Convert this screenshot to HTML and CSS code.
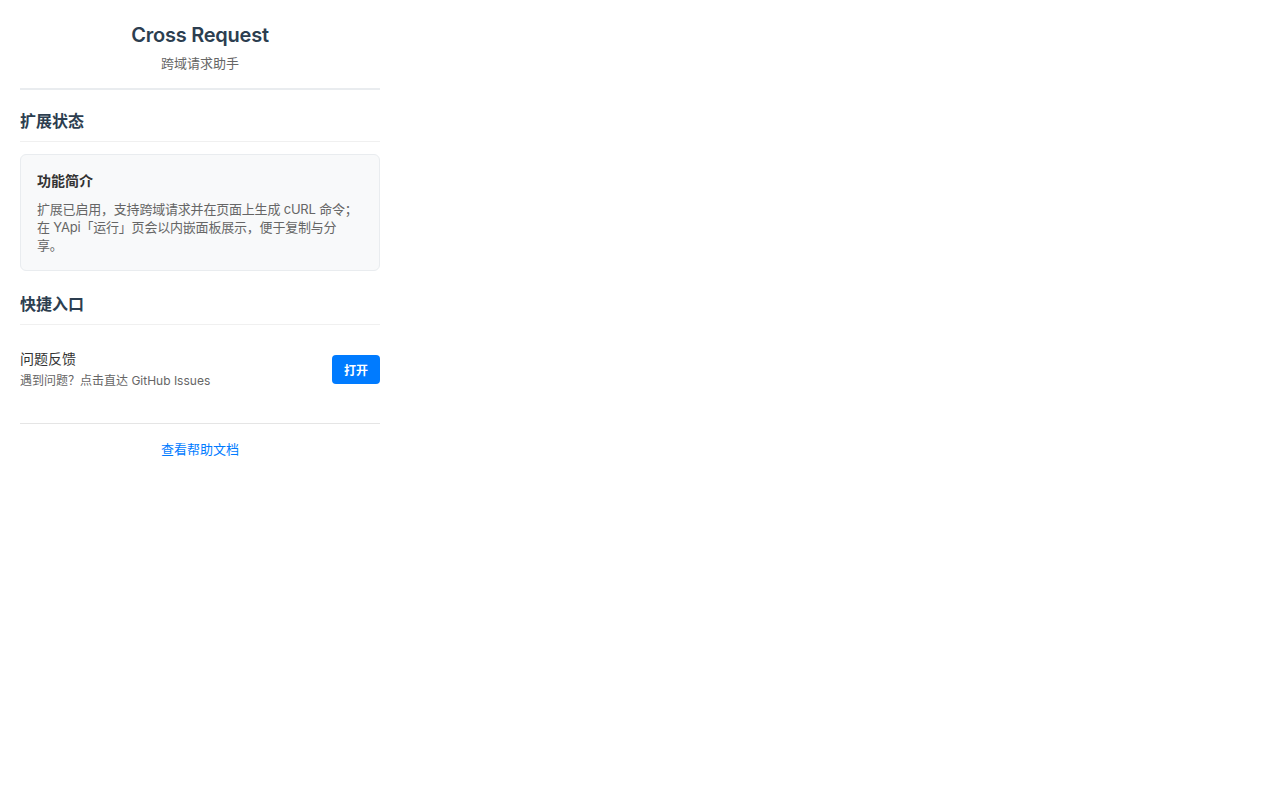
FILE: index.html
```html
<!DOCTYPE html>
<html lang="zh-CN">
<head>
    <meta charset="UTF-8">
    <meta name="viewport" content="width=device-width, initial-scale=1.0">
    <title>Cross Request</title>
    <link rel="stylesheet" href="styles.css">
</head>
<body>
    <div class="popup">
        <div class="header">
            <h1 class="title">Cross Request</h1>
            <p class="subtitle">跨域请求助手</p>
        </div>

        <div class="section">
            <h2 class="section-title">扩展状态</h2>
            <div class="info-card">
                <h3 class="card-title">功能简介</h3>
                <p class="card-text">扩展已启用，支持跨域请求并在页面上生成 cURL 命令；在 YApi「运行」页会以内嵌面板展示，便于复制与分享。</p>
            </div>
        </div>

        <div class="section">
            <h2 class="section-title">快捷入口</h2>
            <div class="action-row">
                <div class="action-info">
                    <div class="action-name">问题反馈</div>
                    <div class="action-desc">遇到问题？点击直达 GitHub Issues</div>
                </div>
                <button class="open-button">打开</button>
            </div>
        </div>

        <div class="footer">
            <a href="#" class="help-link">查看帮助文档</a>
        </div>
    </div>
</body>
</html>
```

FILE: styles.css
```css
* {
    margin: 0;
    padding: 0;
    box-sizing: border-box;
}

body {
    font-family: Inter, "Noto Sans CJK SC", sans-serif;
    background-color: #ffffff;
    color: #333333;
}

.popup {
    width: 400px;
    padding: 20px;
}

.header {
    text-align: center;
    padding-bottom: 16px;
    border-bottom: 2px solid #e9ecef;
    margin-bottom: 20px;
}

.title {
    font-size: 20px;
    line-height: 30px;
    font-weight: 600;
    letter-spacing: -0.25px;
    color: #2c3e50;
}

.subtitle {
    font-size: 13px;
    line-height: 18px;
    color: #666666;
    margin-top: 4px;
}

.section {
    margin-bottom: 22px;
}

.section-title {
    font-size: 16px;
    line-height: 22px;
    font-weight: 600;
    color: #2c3e50;
    padding-bottom: 9px;
    border-bottom: 1px solid #f0f0f0;
    margin-bottom: 12px;
}

.info-card {
    background-color: #f8f9fa;
    border: 1px solid #e9ecef;
    border-radius: 6px;
    padding: 16px;
}

.card-title {
    font-size: 14px;
    line-height: 20px;
    font-weight: 600;
    color: #333333;
}

.card-text {
    max-width: 324px;
    font-size: 13px;
    line-height: 18px;
    letter-spacing: -0.2px;
    color: #666666;
    margin-top: 9px;
}

.action-row {
    display: flex;
    align-items: center;
    justify-content: space-between;
    padding: 12px 0;
}

.action-name {
    font-size: 14px;
    line-height: 20px;
    color: #333333;
}

.action-desc {
    font-size: 12px;
    line-height: 16px;
    color: #666666;
    margin-top: 4px;
}

.open-button {
    font-family: inherit;
    font-size: 12px;
    font-weight: 600;
    color: #ffffff;
    background-color: #007bff;
    border: none;
    border-radius: 4px;
    width: 48px;
    height: 29px;
    cursor: pointer;
}

.footer {
    border-top: 1px solid #e5e5e5;
    padding-top: 15px;
    text-align: center;
    line-height: 18px;
    margin-top: 9px;
}

.help-link {
    font-size: 13px;
    line-height: 18px;
    color: #007bff;
    text-decoration: none;
}
```
